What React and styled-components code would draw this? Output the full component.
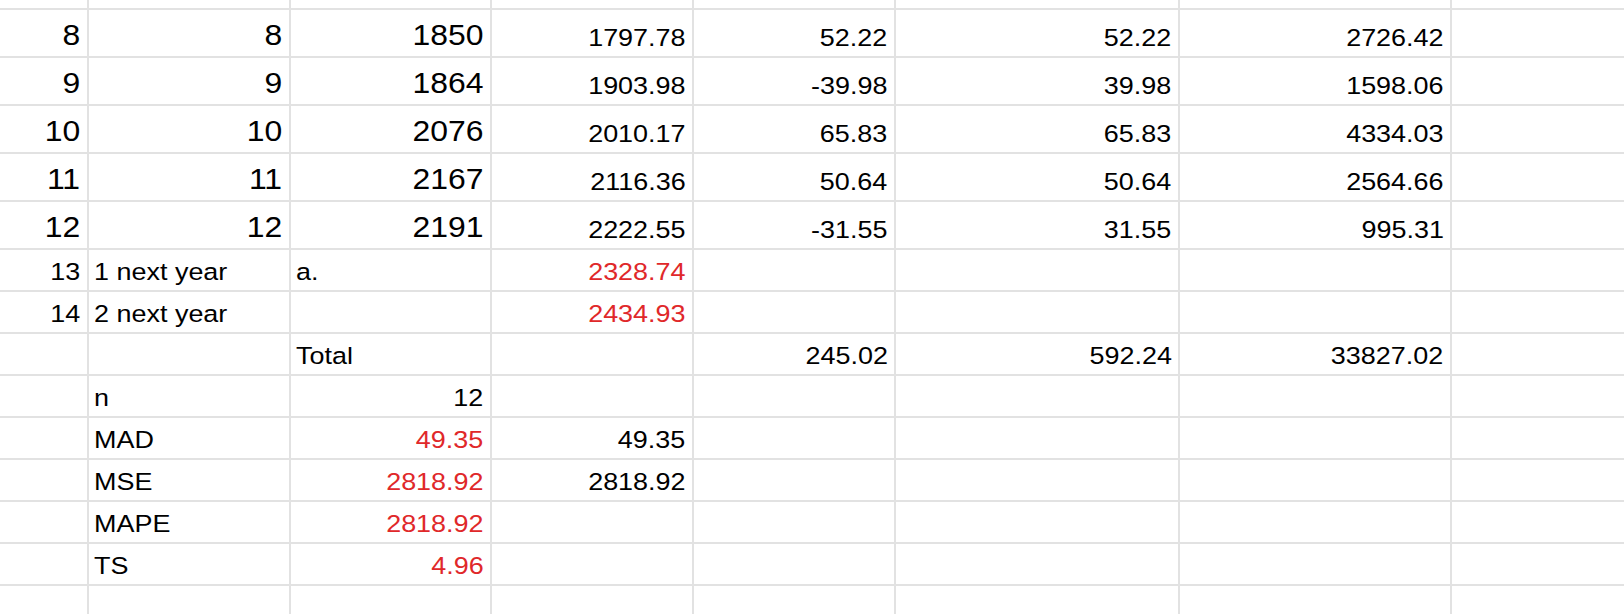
import React from 'react'
import styled, { createGlobalStyle } from 'styled-components'

const GlobalStyle = createGlobalStyle`
    html, body {
        margin: 0;
        padding: 0;
        background: #fff;
        overflow: hidden;
    }
`

const COLS = '89px 202px 201px 202px 202px 284px 272px 1fr'

const Sheet = styled.div`
    width: 1624px;
    height: 614px;
    overflow: hidden;
    background: #fff;
    font-family: "Liberation Sans", Arial, sans-serif;
    color: #000;
`

const Row = styled.div`
    display: grid;
    grid-template-columns: ${COLS};
    height: ${p => p.$h}px;
`

const Cell = styled.div`
    box-sizing: border-box;
    display: flex;
    align-items: flex-end;
    justify-content: ${p => (p.$left ? 'flex-start' : 'flex-end')};
    padding: 0 6.5px 6px 4.5px;
    border-bottom: 2px solid #e2e2e2;
    border-right: 2px solid #e2e2e2;
    white-space: nowrap;
    overflow: hidden;
    &:last-child {
        border-right: none;
    }
`

const Text = styled.span`
    display: inline-block;
    font-size: ${p => (p.$big ? 29 : 24.5)}px;
    line-height: 1;
    color: ${p => (p.$red ? '#e0282a' : '#000')};
    transform: scaleX(1.1);
    transform-origin: ${p => (p.$left ? 'left' : 'right')} bottom;
`

// each cell: [text, flags] where flags: l = left, r = red, b = big
const top = [8, 9, 10, 11, 12].map((n, i) => {
    const c = ['1850', '1864', '2076', '2167', '2191'][i]
    const d = ['1797.78', '1903.98', '2010.17', '2116.36', '2222.55'][i]
    const e = ['52.22', '-39.98', '65.83', '50.64', '-31.55'][i]
    const f = ['52.22', '39.98', '65.83', '50.64', '31.55'][i]
    const g = ['2726.42', '1598.06', '4334.03', '2564.66', '995.31'][i]
    return [[String(n), 'b'], [String(n), 'b'], [c, 'b'], [d], [e], [f], [g], null]
})

const lower = [
    [['13'], ['1 next year', 'l'], ['a.', 'l'], ['2328.74', 'r'], null, null, null, null],
    [['14'], ['2 next year', 'l'], null, ['2434.93', 'r'], null, null, null, null],
    [null, null, ['Total', 'l'], null, ['245.02'], ['592.24'], ['33827.02'], null],
    [null, ['n', 'l'], ['12'], null, null, null, null, null],
    [null, ['MAD', 'l'], ['49.35', 'r'], ['49.35'], null, null, null, null],
    [null, ['MSE', 'l'], ['2818.92', 'r'], ['2818.92'], null, null, null, null],
    [null, ['MAPE', 'l'], ['2818.92', 'r'], null, null, null, null, null],
    [null, ['TS', 'l'], ['4.96', 'r'], null, null, null, null, null],
]

const empty = Array(8).fill(null)

function SheetRow({ cells, h }) {
    return (
        <Row $h={h}>
            {cells.map((c, i) => {
                const flags = (c && c[1]) || ''
                const left = flags.includes('l')
                return (
                    <Cell key={i} $left={left}>
                        {c && (
                            <Text $left={left} $red={flags.includes('r')} $big={flags.includes('b')}>
                                {c[0]}
                            </Text>
                        )}
                    </Cell>
                )
            })}
        </Row>
    )
}

export default function App() {
    return (
        <>
            <GlobalStyle />
            <Sheet>
                <SheetRow cells={empty} h={10} />
                {top.map((r, i) => (
                    <SheetRow key={'t' + i} cells={r} h={48} />
                ))}
                {lower.map((r, i) => (
                    <SheetRow key={'l' + i} cells={r} h={42} />
                ))}
                <SheetRow cells={empty} h={42} />
            </Sheet>
        </>
    )
}
